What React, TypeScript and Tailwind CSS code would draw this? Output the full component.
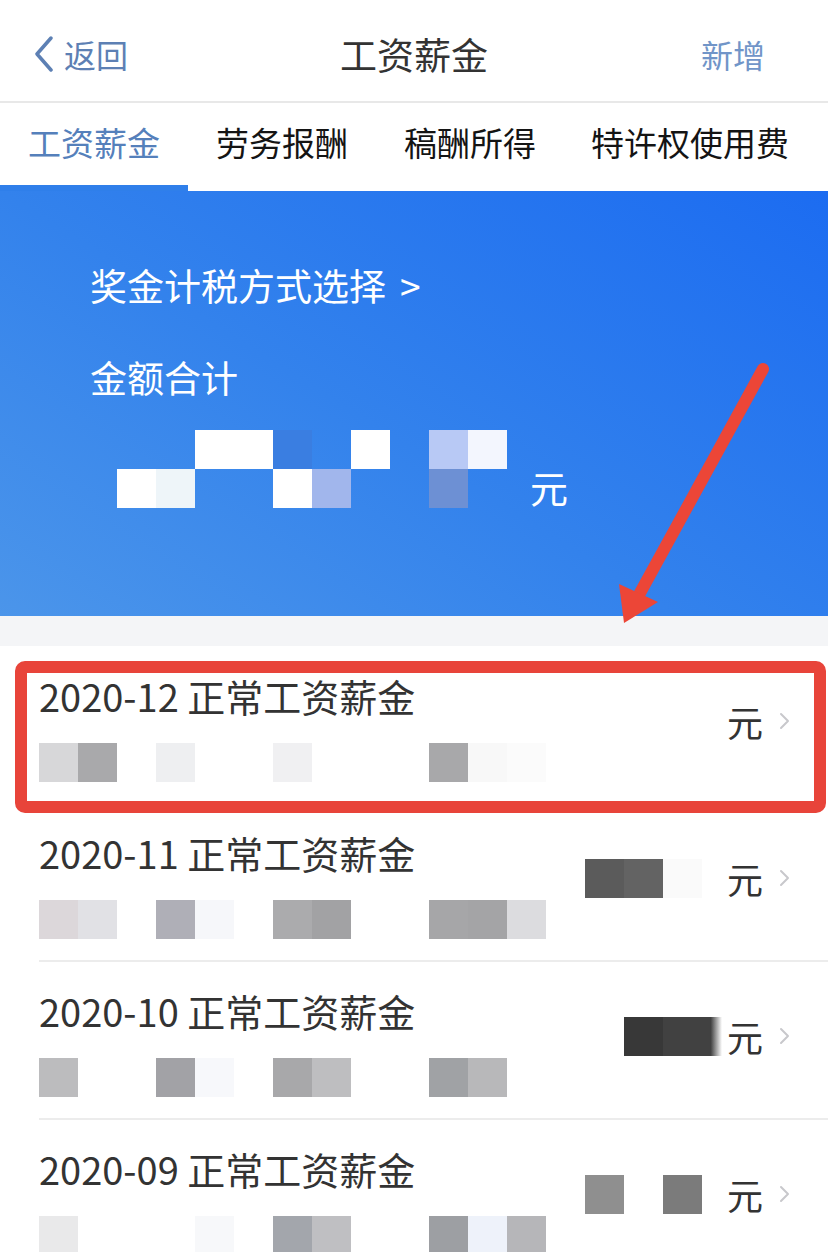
import React from 'react';

const W = 'bg-white';

type Cell = string | null;

const bannerRows: Cell[][] = [
  [null, null, W, W, 'bg-[#3a7ee1]', null, W, null, 'bg-[#b8c9f5]', 'bg-[#f3f6fe]'],
  [W, 'bg-[#eef5f9]', null, null, W, 'bg-[#a1b6ec]', null, null, 'bg-[#6d90d4]', null],
];

const rows: { month: string; cells: Cell[]; amount: Cell[]; tail?: string }[] = [
  {
    month: '2020-12',
    cells: ['bg-[#d7d7d9]', 'bg-[#a9a9ab]', null, 'bg-[#eeeff1]', null, null, 'bg-[#f0f0f2]', null, null, null, 'bg-[#a8a8aa]', 'bg-[#f8f8f8]', 'bg-[#fbfbfb]'],
    amount: [null, null, null],
  },
  {
    month: '2020-11',
    cells: ['bg-[#dcd7da]', 'bg-[#e1e1e5]', null, 'bg-[#afafb7]', 'bg-[#f6f7fa]', null, 'bg-[#ababad]', 'bg-[#a2a2a4]', null, null, 'bg-[#a6a6a8]', 'bg-[#a4a4a6]', 'bg-[#dcdcdf]'],
    amount: ['bg-[#5b5b5b]', 'bg-[#636363]', 'bg-[#fafafa]'],
  },
  {
    month: '2020-10',
    cells: ['bg-[#bcbcbe]', null, null, 'bg-[#a2a2a6]', 'bg-[#f7f8fb]', null, 'bg-[#a8a8aa]', 'bg-[#bebec0]', null, null, 'bg-[#a0a2a5]', 'bg-[#b8b8ba]', null],
    amount: [null, 'bg-[#383838]', 'bg-[#414141]'],
    tail: 'bg-[linear-gradient(90deg,#414141_0%,#414141_35%,rgba(255,255,255,0)_80%)]',
  },
  {
    month: '2020-09',
    cells: ['bg-[#e9e9ea]', null, null, null, 'bg-[#f7f8fa]', null, 'bg-[#a3a6ac]', 'bg-[#bfbfc2]', null, null, 'bg-[#9d9fa3]', 'bg-[#eef2fa]', 'bg-[#b6b6b9]'],
    amount: ['bg-[#8f8f8f]', null, 'bg-[#7b7b7b]'],
  },
];

function Mosaic({ cells }: { cells: Cell[] }) {
  return (
    <div className="flex">
      {cells.map((c, i) => (
        <div key={i} className={`w-[39px] h-[39px] shrink-0 ${c ?? ''}`} />
      ))}
    </div>
  );
}

function Chevron() {
  return (
    <svg width="11" height="18" viewBox="0 0 11 18" fill="none">
      <path d="M2 2l7 7-7 7" stroke="#c8c8cc" strokeWidth="2" strokeLinecap="round" strokeLinejoin="round" />
    </svg>
  );
}

function Row({ month, cells, amount, tail, first }: { month: string; cells: Cell[]; amount: Cell[]; tail?: string; first?: boolean }) {
  return (
    <div className="relative pl-[39px]">
      <div className={`flex items-center h-[158px] ${first ? '' : 'border-b-2 border-[#ececec]'}`}>
        <div className="flex flex-col flex-1 pt-[6px]">
          <div className="text-[38px] leading-[44px] text-[#333333] whitespace-nowrap">
            {month} 正常工资薪金
          </div>
          <div className="mt-[25px]">
            <Mosaic cells={cells} />
          </div>
        </div>
        <div className="flex items-center pr-[38px] pb-[8px]">
          <Mosaic cells={amount} />
          <div className={`w-[25px] h-[39px] ${tail ?? ''}`} />
          <span className="text-[36px] leading-[40px] text-[#333333]">元</span>
          <div className="ml-[16px] flex items-center">
            <Chevron />
          </div>
        </div>
      </div>
      {first && (
        <div className="absolute left-[15px] right-[2px] top-[15px] h-[152px] border-[12px] border-[#e8443a] rounded-[10px] pointer-events-none" />
      )}
    </div>
  );
}

export default function App() {
  return (
    <div className="relative w-[828px] h-[1252px] overflow-hidden bg-white font-['Noto_Sans_CJK_SC','Noto_Sans',sans-serif]">
      {/* nav bar */}
      <div className="relative flex items-center justify-between h-[101px] px-[34px] pt-[6px]">
        <div className="flex items-center gap-[10px] text-[#5d80b4]">
          <svg width="20" height="36" viewBox="0 0 20 36" fill="none">
            <path d="M17 2L3 18l14 16" stroke="#5d80b4" strokeWidth="3.5" strokeLinecap="round" strokeLinejoin="round" />
          </svg>
          <span className="text-[32px] leading-[40px]">返回</span>
        </div>
        <div className="absolute left-0 right-0 text-center text-[37px] leading-[44px] text-[#333333]">工资薪金</div>
        <span className="text-[32px] leading-[40px] text-[#7195c8] pr-[29px]">新增</span>
      </div>
      <div className="h-[2px] bg-[#e8e8e8]" />

      {/* tabs */}
      <div className="flex h-[88px]">
        <div className="relative flex items-center justify-center w-[188px] pb-[8px] text-[33px] text-[#5580bb]">
          工资薪金
          <div className="absolute left-0 right-0 bottom-0 h-[6px] bg-[#2f7fea]" />
        </div>
        <div className="flex items-center justify-center w-[188px] pb-[8px] text-[33px] text-[#141414]">劳务报酬</div>
        <div className="flex items-center justify-center w-[188px] pb-[8px] text-[33px] text-[#141414]">稿酬所得</div>
        <div className="flex items-center pl-[27px] pb-[8px] text-[33px] text-[#141414] whitespace-nowrap">特许权使用费</div>
      </div>

      {/* banner */}
      <div className="h-[425px] pl-[90px] pt-[72px] bg-[linear-gradient(32deg,#4b95ea_0%,#3382ec_45%,#1c6cf1_100%)] text-white">
        <div className="text-[37px] leading-[44px]">
          奖金计税方式选择<span className="ml-[14px]">&gt;</span>
        </div>
        <div className="mt-[48px] text-[37px] leading-[44px]">金额合计</div>
        <div className="mt-[31px] ml-[27px] flex items-end">
          <div className="flex flex-col">
            {bannerRows.map((r, i) => (
              <Mosaic key={i} cells={r} />
            ))}
          </div>
          <span className="ml-[23px] text-[38px] leading-[42px]">元</span>
        </div>
      </div>

      <div className="h-[30px] bg-[#f4f5f7]" />

      {/* list */}
      <div className="flex flex-col">
        {rows.map((r, i) => (
          <Row key={r.month} {...r} first={i === 0} />
        ))}
      </div>

      {/* annotation arrow */}
      <svg className="absolute left-0 top-0 pointer-events-none" width="828" height="1252" viewBox="0 0 828 1252">
        <line x1="763" y1="369" x2="640" y2="593" stroke="#ec4637" strokeWidth="12" strokeLinecap="round" />
        <polygon points="624,623 619,584 658,602" fill="#ec4637" />
      </svg>
    </div>
  );
}
